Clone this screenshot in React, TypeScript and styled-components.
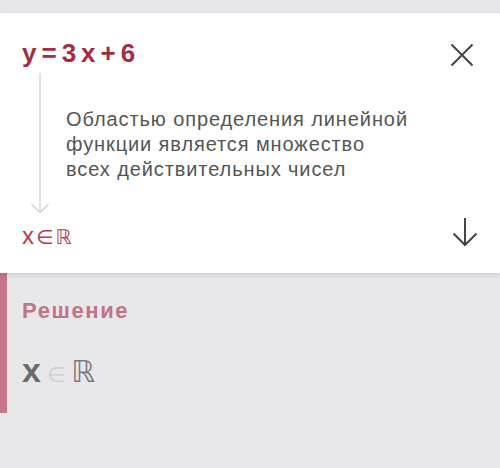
import styled, { createGlobalStyle } from 'styled-components';

const GlobalStyle = createGlobalStyle`
    html, body {
        margin: 0;
        padding: 0;
        background: #e8e8ea;
    }
    body {
        font-family: "Liberation Sans", Arial, sans-serif;
    }
`;

const App = () => {
    return (
        <>
            <GlobalStyle />
            <Page>
                <TopStrip />
                <Card>
                    <Header>
                        <Equation>y=3x+6</Equation>
                        <IconButton aria-label='Закрыть'>
                            <svg width='24' height='24' viewBox='0 0 24 24'>
                                <path d='M1.5 1.5 L22.5 22.5 M22.5 1.5 L1.5 22.5' stroke='#444' strokeWidth='2' fill='none' />
                            </svg>
                        </IconButton>
                    </Header>
                    <Middle>
                        <Connector>
                            <svg width='20' height='141' viewBox='0 0 20 141'>
                                <path d='M10 0 V140 M1.5 131 L10 139.5 L18.5 131' stroke='#d2d2d4' strokeWidth='1.3' fill='none' />
                            </svg>
                        </Connector>
                        <Description>
                            Областью определения линейной<br />
                            функции является множество<br />
                            всех действительных чисел
                        </Description>
                    </Middle>
                    <Footer>
                        <Result>
                            x<Sym>∈</Sym><Sym>ℝ</Sym>
                        </Result>
                        <IconButton aria-label='Далее'>
                            <svg width='26' height='30' viewBox='0 0 26 30'>
                                <path d='M13 1 V28 M1.5 16.5 L13 28 L24.5 16.5' stroke='#444' strokeWidth='2' fill='none' />
                            </svg>
                        </IconButton>
                    </Footer>
                </Card>
                <Solution>
                    <SolutionTitle>Решение</SolutionTitle>
                    <SolutionAnswer>
                        <BoldX>x</BoldX>
                        <LightIn>∈</LightIn>
                        <RealSet>ℝ</RealSet>
                    </SolutionAnswer>
                </Solution>
            </Page>
        </>
    );
};

export default App;

// styled-components

const Page = styled.div`
    width: 500px;
    height: 468px;
    background: #e8e8ea;
    overflow: hidden;
`;

const TopStrip = styled.div`
    height: 13px;
    background: #e6e6e8;
`;

const Card = styled.div`
    position: relative;
    z-index: 1;
    height: 260px;
    box-sizing: border-box;
    padding: 25px 26px 0 22px;
    display: flex;
    flex-direction: column;
    background: #fff;
    box-shadow: 0 2px 5px rgba(0, 0, 0, 0.12);
`;

const Header = styled.div`
    display: flex;
    justify-content: space-between;
    align-items: flex-start;
`;

const Equation = styled.div`
    font-size: 26px;
    line-height: 30px;
    font-weight: 700;
    letter-spacing: 5px;
    color: #a52a42;
`;

const IconButton = styled.div`
    display: flex;
    margin-top: 5px;
`;

const Middle = styled.div`
    display: flex;
`;

const Connector = styled.div`
    width: 44px;
    padding: 5px 0 0 8px;
    box-sizing: border-box;
    display: flex;
`;

const Description = styled.p`
    margin: 0;
    padding-top: 39px;
    font-size: 20px;
    line-height: 25px;
    letter-spacing: 0.9px;
    color: #555;
`;

const Footer = styled.div`
    display: flex;
    justify-content: space-between;
    align-items: flex-start;
    margin-top: 8px;

    & ${IconButton} {
        margin-top: -5px;
        margin-right: -4px;
    }
`;

const Result = styled.div`
    font-size: 24px;
    line-height: 28px;
    color: #b03a52;
`;

const Sym = styled.span`
    font-family: "DejaVu Sans", sans-serif;
    font-size: 20px;
    margin-left: 2px;
`;

const Solution = styled.section`
    height: 140px;
    box-sizing: border-box;
    padding: 25px 0 0 15px;
    border-left: 7px solid #c77689;
`;

const SolutionTitle = styled.h3`
    margin: 0;
    font-size: 22px;
    line-height: 26px;
    font-weight: 700;
    letter-spacing: 1.6px;
    color: #c27487;
`;

const SolutionAnswer = styled.div`
    margin-top: 26px;
    display: flex;
    align-items: baseline;
    gap: 6px;
    line-height: 40px;
`;

const BoldX = styled.span`
    font-size: 34px;
    font-weight: 700;
    color: #6b6b6d;
`;

const LightIn = styled.span`
    font-family: "DejaVu Sans", sans-serif;
    font-size: 21px;
    color: #cfcfd1;
`;

const RealSet = styled.span`
    font-family: "DejaVu Sans", sans-serif;
    font-size: 30px;
    color: #7a7a7c;
`;
